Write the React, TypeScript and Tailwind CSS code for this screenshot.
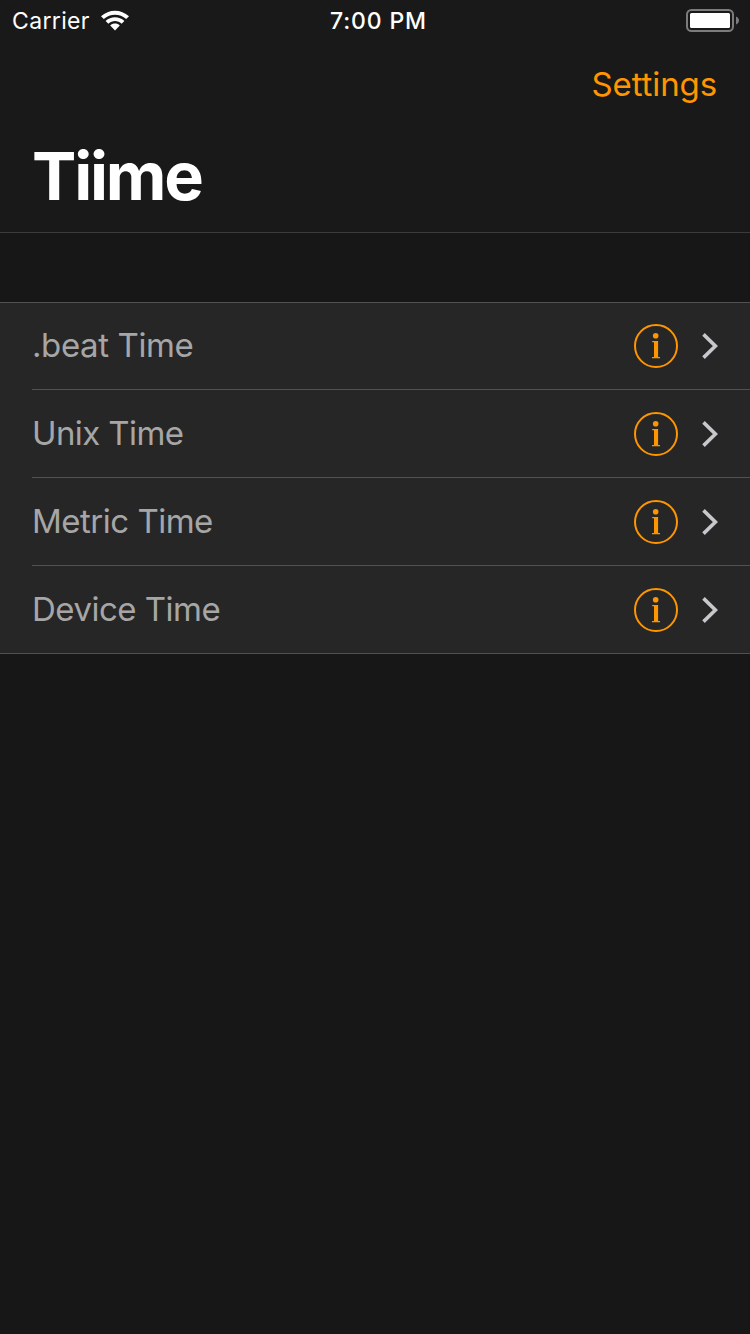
import React from "react";

const rows = [
  { label: ".beat Time", height: "h-[87px]", tracking: "tracking-[-0.4px]" },
  { label: "Unix Time", height: "h-[88px]", tracking: "tracking-[-0.6px]" },
  { label: "Metric Time", height: "h-[88px]", tracking: "tracking-[-0.5px]" },
  { label: "Device Time", height: "h-[87px]", tracking: "tracking-[-0.5px]" },
];

function WifiIcon() {
  return (
    <svg width="30" height="22" viewBox="0 0 30 22" fill="#fff">
      <path d="M1 6.3 C8.8 -1.2 21.2 -1.2 29 6.3 L26.2 9.1 C20 3.3 10 3.3 3.8 9.1 Z" />
      <path d="M5.6 10.9 C11 5.9 19 5.9 24.4 10.9 L21.6 13.7 C17.9 10.1 12.1 10.1 8.4 13.7 Z" />
      <path d="M10.2 15.4 C12.9 12.9 17.1 12.9 19.8 15.4 L15 20.4 Z" />
    </svg>
  );
}

function BatteryIcon() {
  return (
    <svg width="54" height="23" viewBox="0 0 54 23">
      <rect x="1" y="1" width="46" height="21" rx="4.5" fill="none" stroke="#7c7c7c" strokeWidth="2" />
      <rect x="4" y="4" width="40" height="15" rx="1.5" fill="#fff" />
      <path d="M50 7.5 C54 9 54 14 50 15.5 Z" fill="#7c7c7c" />
    </svg>
  );
}

function InfoIcon() {
  return (
    <svg width="44" height="44" viewBox="0 0 44 44">
      <circle cx="22" cy="22" r="21" fill="none" stroke="#ff9500" strokeWidth="2" />
      <circle cx="21.7" cy="11.8" r="2.8" fill="#ff9500" />
      <path d="M18.2 17 H24.1 V33 H26 V34.2 H18 V33 H20 V18.3 H18.2 Z" fill="#ff9500" />
    </svg>
  );
}

function Chevron() {
  return (
    <svg width="16" height="26" viewBox="0 0 16 26" fill="none" stroke="#c7c7cc" strokeWidth="3.6">
      <path d="M1.5 1.4 L13.4 13 L1.5 24.6" />
    </svg>
  );
}

export default function App() {
  return (
    <div className="flex h-[1334px] w-[750px] flex-col overflow-hidden bg-[#171717] font-['Inter',sans-serif]">
      <header className="flex h-[233px] flex-col border-b border-[#3b3b3b] bg-[#191919]">
        <div className="grid h-10 grid-cols-3 items-center pr-[10px] pl-[12px] text-white">
          <div className="flex items-center gap-[10px]">
            <span className="pt-[2px] text-[23px] leading-[38px] tracking-[0.35px]">Carrier</span>
            <span className="pt-[2px]">
              <WifiIcon />
            </span>
          </div>
          <span className="pt-[2px] pl-[5px] text-center text-[23px] leading-[38px] font-medium tracking-[0.85px]">7:00 PM</span>
          <div className="flex justify-end">
            <BatteryIcon />
          </div>
        </div>
        <div className="flex h-[88px] justify-end pr-[33px]">
          <button className="h-[88px] text-[33px] leading-[88px] tracking-[-0.1px] text-[#ff9500]">Settings</button>
        </div>
        <h1 className="pl-[32px] text-[66.5px] leading-[97px] font-bold tracking-[-2.2px] text-white">Tiime</h1>
      </header>
      <ul className="mt-[69px] flex flex-col border-y border-[#515151] bg-[#262626]">
        {rows.map((row, i) => (
          <li key={row.label} className="pl-[32px]">
            <div
              className={`${row.height} flex items-center pr-[32px] ${
                i < rows.length - 1 ? "border-b border-[#515151]" : ""
              }`}
            >
              <span className={`grow pb-[2px] text-[33px] leading-[84px] text-[#a6a6a6] ${row.tracking}`}>{row.label}</span>
              <InfoIcon />
              <span className="ml-[24px]">
                <Chevron />
              </span>
            </div>
          </li>
        ))}
      </ul>
    </div>
  );
}
